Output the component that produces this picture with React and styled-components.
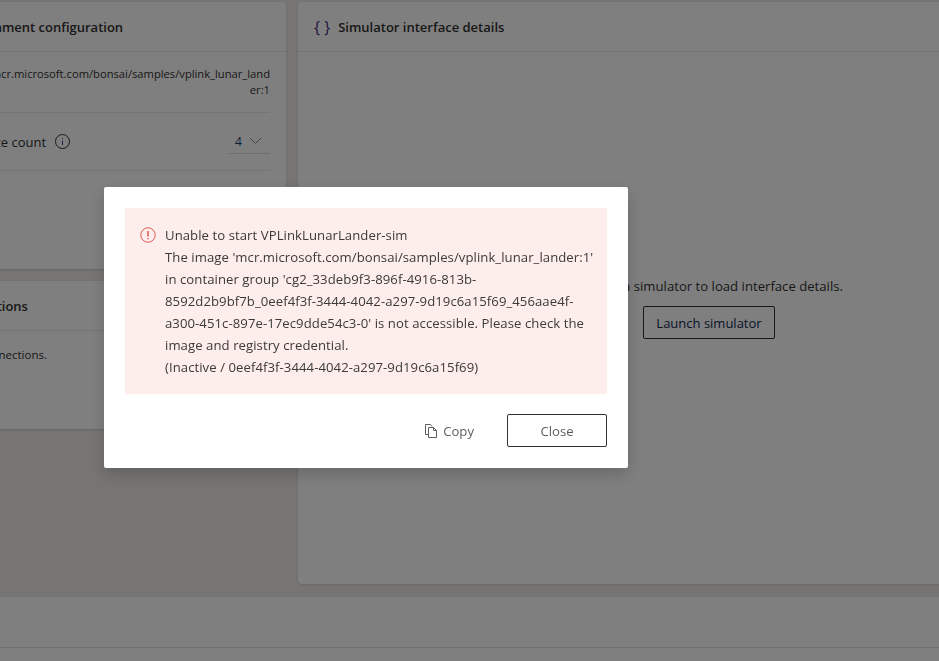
import React from "react";
import styled, { createGlobalStyle } from "styled-components";

const GlobalStyle = createGlobalStyle`
  html, body {
    margin: 0;
    padding: 0;
    height: 100%;
    overflow: hidden;
    background: #edebe9;
    font-family: "Open Sans", "Noto Sans", "Liberation Sans", sans-serif;
    color: #323130;
  }
  * {
    box-sizing: border-box;
  }
`;

const Page = styled.div`
  width: 939px;
  height: 661px;
  display: flex;
  flex-direction: column;
  overflow: hidden;
`;

const Main = styled.div`
  flex: 0 0 597px;
  display: flex;
  gap: 12px;
  padding-top: 2px;
  margin-left: -114px;
`;

const LeftCol = styled.div`
  flex: 0 0 400px;
  display: flex;
  flex-direction: column;
  gap: 12px;
`;

const Card = styled.section`
  background: #fff;
  border-radius: 4px;
  box-shadow: 0 1px 3px rgba(0, 0, 0, 0.13);
  height: ${(p) => p.$height}px;
  flex: ${(p) => (p.$grow ? "0 0 822px" : "none")};
`;

const CardHeader = styled.header`
  height: 50px;
  display: flex;
  align-items: center;
  gap: 8px;
  padding-left: ${(p) => p.$indent || 16}px;
  border-bottom: 1px solid #edebe9;
  font-size: 13px;
  font-weight: 600;
`;

const TitleIcon = styled.span`
  flex: 0 0 16px;
  font-size: 16px;
  font-weight: 400;
  color: #4a2a78;
  white-space: nowrap;
`;

const ConfigBody = styled.div`
  padding: 0 16px 0 71px;
  font-size: 12px;
`;

const ConfigRow = styled.div`
  min-height: ${(p) => p.$height}px;
  display: flex;
  align-items: center;
  justify-content: space-between;
  border-bottom: 1px solid #edebe9;
`;

const ImageValue = styled.div`
  flex: 0 0 282px;
  margin-left: auto;
  text-align: right;
  line-height: 16px;
  word-break: break-all;
  font-size: 11.2px;
`;

const LabelGroup = styled.div`
  display: flex;
  align-items: center;
  gap: 8px;
  font-size: 13px;
`;

const CountSelect = styled.div`
  width: 42px;
  height: 24px;
  display: flex;
  align-items: center;
  gap: 7px;
  padding-left: 7px;
  border-bottom: 1px solid #e1dfdd;
  font-size: 12px;
  color: #0f3d73;
`;

const ConnectionText = styled.p`
  margin: 0;
  padding-top: 16px;
  width: 161px;
  text-align: right;
  font-size: 11.5px;
`;

const EmptyState = styled.div`
  padding-top: 225px;
  display: flex;
  flex-direction: column;
  align-items: center;
  gap: 11px;
  font-size: 13.15px;
`;

const LaunchButton = styled.button`
  flex: none;
  width: 132px;
  height: 33px;
  background: #fff;
  border: 1px solid #323130;
  border-radius: 2px;
  font: inherit;
  font-size: 13px;
  color: #102a56;
`;

const Footer = styled.footer`
  flex: 1;
  background: #fff;
  padding-top: 50px;
`;

const FooterRule = styled.div`
  border-top: 1px solid #e1dfdd;
`;

const Overlay = styled.div`
  position: fixed;
  inset: 0;
  background: rgba(0, 0, 0, 0.5);
`;

const Dialog = styled.div`
  position: fixed;
  left: 104px;
  top: 187px;
  width: 524px;
  height: 281px;
  padding: 21px;
  background: #fff;
  border-radius: 2px;
  box-shadow: 0 6px 16px rgba(0, 0, 0, 0.18);
  display: flex;
  flex-direction: column;
`;

const ErrorBox = styled.div`
  height: 186px;
  display: flex;
  gap: 9px;
  padding: 16px 15px;
  background: #fdedeb;
`;

const ErrorIcon = styled.svg`
  flex: 0 0 16px;
  width: 16px;
  height: 16px;
  margin-top: 3px;
`;

const ErrorText = styled.div`
  font-size: 13.15px;
  letter-spacing: 0.06px;
  line-height: 22px;
  color: #3b3a39;
  white-space: nowrap;
`;

const Actions = styled.div`
  margin-top: 20px;
  display: flex;
  justify-content: flex-end;
  align-items: center;
  gap: 33px;
`;

const CopyButton = styled.button`
  display: flex;
  align-items: center;
  gap: 5px;
  padding: 0;
  border: 0;
  background: none;
  font: inherit;
  font-size: 13.15px;
  color: #605e5c;
`;

const CloseButton = styled.button`
  width: 100px;
  height: 33px;
  background: #fff;
  border: 1px solid #323130;
  border-radius: 2px;
  font: inherit;
  font-size: 13.15px;
  color: #605e5c;
`;

function InfoIcon() {
  return (
    <svg width="17" height="17" viewBox="0 0 17 17" fill="none">
      <circle cx="8.5" cy="8.5" r="7" stroke="#323130" />
      <path d="M8.5 7.500v4.500M8.500 5v1" stroke="#5c2d91" />
    </svg>
  );
}

function ChevronIcon() {
  return (
    <svg width="13" height="8" viewBox="0 0 13 8" fill="none">
      <path d="M1 1l5.500 5.500L12 1" stroke="#8a8886" />
    </svg>
  );
}

function CopyIcon() {
  return (
    <svg width="13" height="14" viewBox="0 0 13 14" fill="none" stroke="#605e5c">
      <path d="M3.500 10.500h-3v-10h5l1.500 2" />
      <path d="M3.500 3.500h5l3 3v7h-8z" />
      <path d="M8.500 3.500v3h3" />
    </svg>
  );
}

export default function App() {
  return (
    <Page>
      <GlobalStyle />
      <Main>
        <LeftCol>
          <Card $height={267}>
            <CardHeader $indent={68}>Environment configuration</CardHeader>
            <ConfigBody>
              <ConfigRow $height={61}>
                <ImageValue>mcr.microsoft.com/bonsai/samples/vplink_lunar_lander:1</ImageValue>
              </ConfigRow>
              <ConfigRow $height={58}>
                <LabelGroup>
                  Instance count
                  <InfoIcon />
                </LabelGroup>
                <CountSelect>
                  4
                  <ChevronIcon />
                </CountSelect>
              </ConfigRow>
            </ConfigBody>
          </Card>
          <Card $height={148}>
            <CardHeader $indent={64}>Connections</CardHeader>
            <ConnectionText>No connections.</ConnectionText>
          </Card>
        </LeftCol>
        <Card $height={582} $grow>
          <CardHeader>
            <TitleIcon>{"{ }"}</TitleIcon>
            Simulator interface details
          </CardHeader>
          <EmptyState>
            Launch a simulator to load interface details.
            <LaunchButton>Launch simulator</LaunchButton>
          </EmptyState>
        </Card>
      </Main>
      <Footer>
        <FooterRule />
      </Footer>
      <Overlay />
      <Dialog>
        <ErrorBox>
          <ErrorIcon viewBox="0 0 16 16" fill="none">
            <circle cx="8" cy="8" r="7.200" stroke="#dd5a55" />
            <path d="M8 4v5.500M8 11v1.200" stroke="#dd5a55" strokeWidth="1.500" />
          </ErrorIcon>
          <ErrorText>
            Unable to start VPLinkLunarLander-sim
            <br />
            The image 'mcr.microsoft.com/bonsai/samples/vplink_lunar_lander:1'
            <br />
            in container group 'cg2_33deb9f3-896f-4916-813b-
            <br />
            8592d2b9bf7b_0eef4f3f-3444-4042-a297-9d19c6a15f69_456aae4f-
            <br />
            a300-451c-897e-17ec9dde54c3-0' is not accessible. Please check the
            <br />
            image and registry credential.
            <br />
            (Inactive / 0eef4f3f-3444-4042-a297-9d19c6a15f69)
          </ErrorText>
        </ErrorBox>
        <Actions>
          <CopyButton>
            <CopyIcon />
            Copy
          </CopyButton>
          <CloseButton>Close</CloseButton>
        </Actions>
      </Dialog>
    </Page>
  );
}
